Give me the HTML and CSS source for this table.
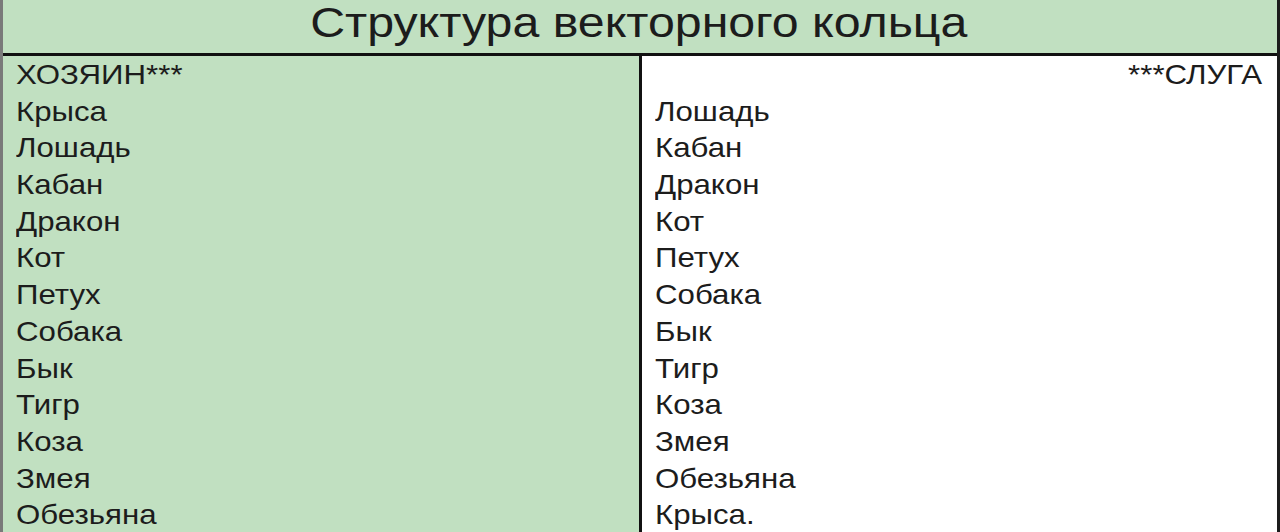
FILE: index.html
```html
<!DOCTYPE html>
<html lang="ru">
<head>
<meta charset="utf-8">
<link rel="stylesheet" href="styles.css">
</head>
<body>
<div class="sheet">
  <div class="title"><span class="title-text">Структура векторного кольца</span></div>
  <div class="cols">
    <div class="col master">
      <div class="row">ХОЗЯИН***</div>
      <div class="row">Крыса</div>
      <div class="row">Лошадь</div>
      <div class="row">Кабан</div>
      <div class="row">Дракон</div>
      <div class="row">Кот</div>
      <div class="row">Петух</div>
      <div class="row">Собака</div>
      <div class="row">Бык</div>
      <div class="row">Тигр</div>
      <div class="row">Коза</div>
      <div class="row">Змея</div>
      <div class="row">Обезьяна</div>
    </div>
    <div class="col servant">
      <div class="row right">***СЛУГА</div>
      <div class="row">Лошадь</div>
      <div class="row">Кабан</div>
      <div class="row">Дракон</div>
      <div class="row">Кот</div>
      <div class="row">Петух</div>
      <div class="row">Собака</div>
      <div class="row">Бык</div>
      <div class="row">Тигр</div>
      <div class="row">Коза</div>
      <div class="row">Змея</div>
      <div class="row">Обезьяна</div>
      <div class="row">Крыса.</div>
    </div>
  </div>
</div>
</body>
</html>
```
FILE: styles.css
```css
html, body {
  margin: 0;
  padding: 0;
  background: #ffffff;
}
.sheet {
  width: 1280px;
  height: 532px;
  box-sizing: border-box;
  border-left: 3px solid #7a7a7a;
  border-right: 3px solid #1c1c1c;
  font-family: "Liberation Sans", Arial, sans-serif;
  color: #1c1c1c;
  overflow: hidden;
}
.title {
  height: 53px;
  background: #c1e0c1;
  border-bottom: 3px solid #111;
  text-align: center;
  font-size: 42px;
  line-height: 45px;
  padding-right: 3px;
  overflow: hidden;
}
.title-text {
  display: inline-block;
  transform: scaleX(1.15);
  transform-origin: center;
}
.cols {
  display: flex;
  height: 476px;
}
.col {
  display: flex;
  flex-direction: column;
  font-size: 28px;
  padding-top: 1px;
  box-sizing: border-box;
}
.master {
  width: 639px;
  background: #c1e0c1;
  border-right: 3px solid #111;
  padding-left: 13px;
}
.servant {
  flex: 1;
  padding-left: 13px;
  padding-right: 15px;
}
.row {
  height: 36.7px;
  line-height: 36.7px;
  white-space: nowrap;
  transform: scaleX(1.115);
  transform-origin: left center;
}
.right {
  text-align: right;
  transform-origin: right center;
}
```
